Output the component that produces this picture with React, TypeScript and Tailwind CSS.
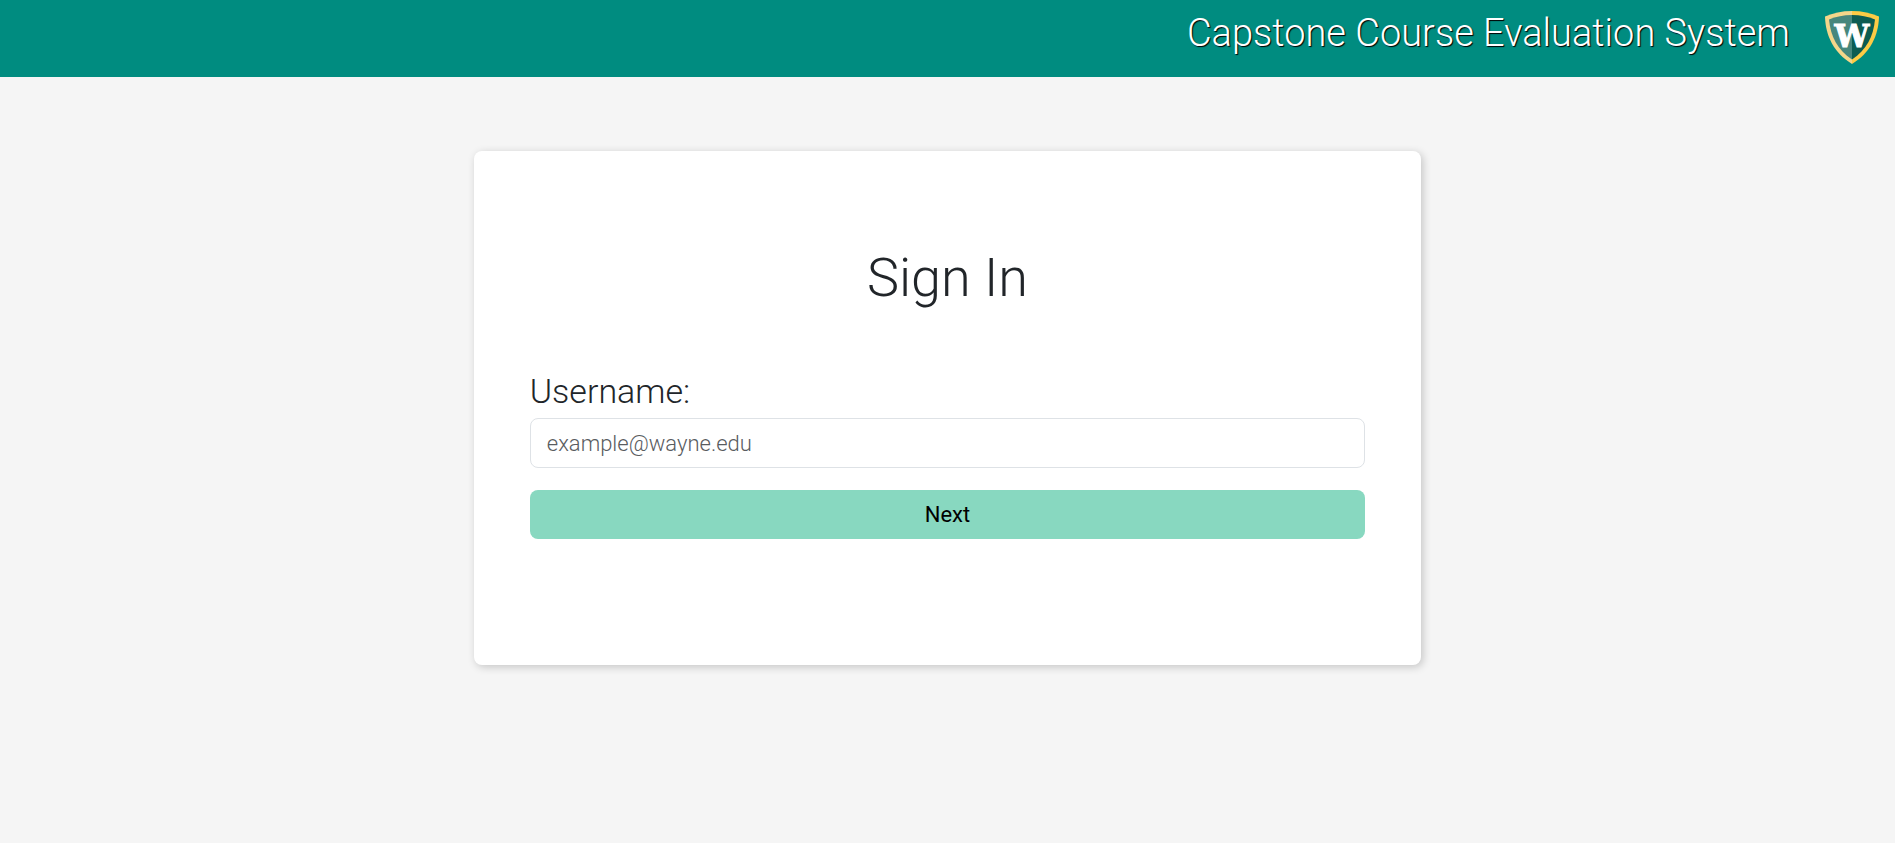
function ShieldLogo() {
  return (
    <svg viewBox="0 0 56 56" className="h-14 w-14 shrink-0" role="img" aria-label="Wayne State shield">
      <path d="M28 1C18 1 9 3 1 6.500C1.500 26 10 43 28 54Z" fill="#f4d68a" />
      <path d="M28 1C38 1 47 3 55 6.500C54.500 26 46 43 28 54Z" fill="#fccb45" />
      <path d="M28 5C19.500 5 12 6.500 5 9.500C6.500 26 13.500 40 28 49.500Z" fill="#47877d" />
      <path d="M28 5C36.500 5 44 6.500 51 9.500C49.500 26 42.500 40 28 49.500Z" fill="#0c5c52" />
      <text
        x="28"
        y="37"
        textAnchor="middle"
        fill="#ffffff"
        stroke="#ffffff"
        strokeWidth="1"
        className="font-['DejaVu_Serif',serif] text-[31px] font-bold"
      >
        W
      </text>
    </svg>
  );
}

export default function App() {
  return (
    <div className="min-h-screen bg-[#f5f5f5] font-[Roboto,sans-serif] font-light text-[#212529]">
      <header className="flex justify-end gap-[34px] bg-[#008c80] pt-[10px] pr-[15px] pb-[11px]">
        <h1 className="text-[38px] leading-[47px] text-white [text-shadow:1px_1px_1px_#000]">
          Capstone Course Evaluation System
        </h1>
        <ShieldLogo />
      </header>

      <main className="flex justify-center pt-[74px]">
        <form
          className="w-1/2 rounded-lg bg-white px-14 pt-[95px] pb-[126px] shadow-[2px_2px_8px_rgba(0,0,0,0.2)]"
          onSubmit={(event) => event.preventDefault()}
        >
          <h2 className="text-center text-[54px] leading-[64px]">Sign In</h2>
          <label htmlFor="username" className="mt-14 mb-px block text-[34px] leading-[51px]">
            Username:
          </label>
          <input
            id="username"
            type="text"
            placeholder="example@wayne.edu"
            className="block h-[50px] w-full rounded-lg border border-[#dee2e6] bg-white px-4 text-[22px] placeholder:text-[#595c5f] placeholder:opacity-100"
          />
          <button
            type="submit"
            className="mt-[22px] block h-[49px] w-full rounded-lg bg-[#88d8c0] text-[22px] font-normal text-black"
          >
            Next
          </button>
        </form>
      </main>
    </div>
  );
}
